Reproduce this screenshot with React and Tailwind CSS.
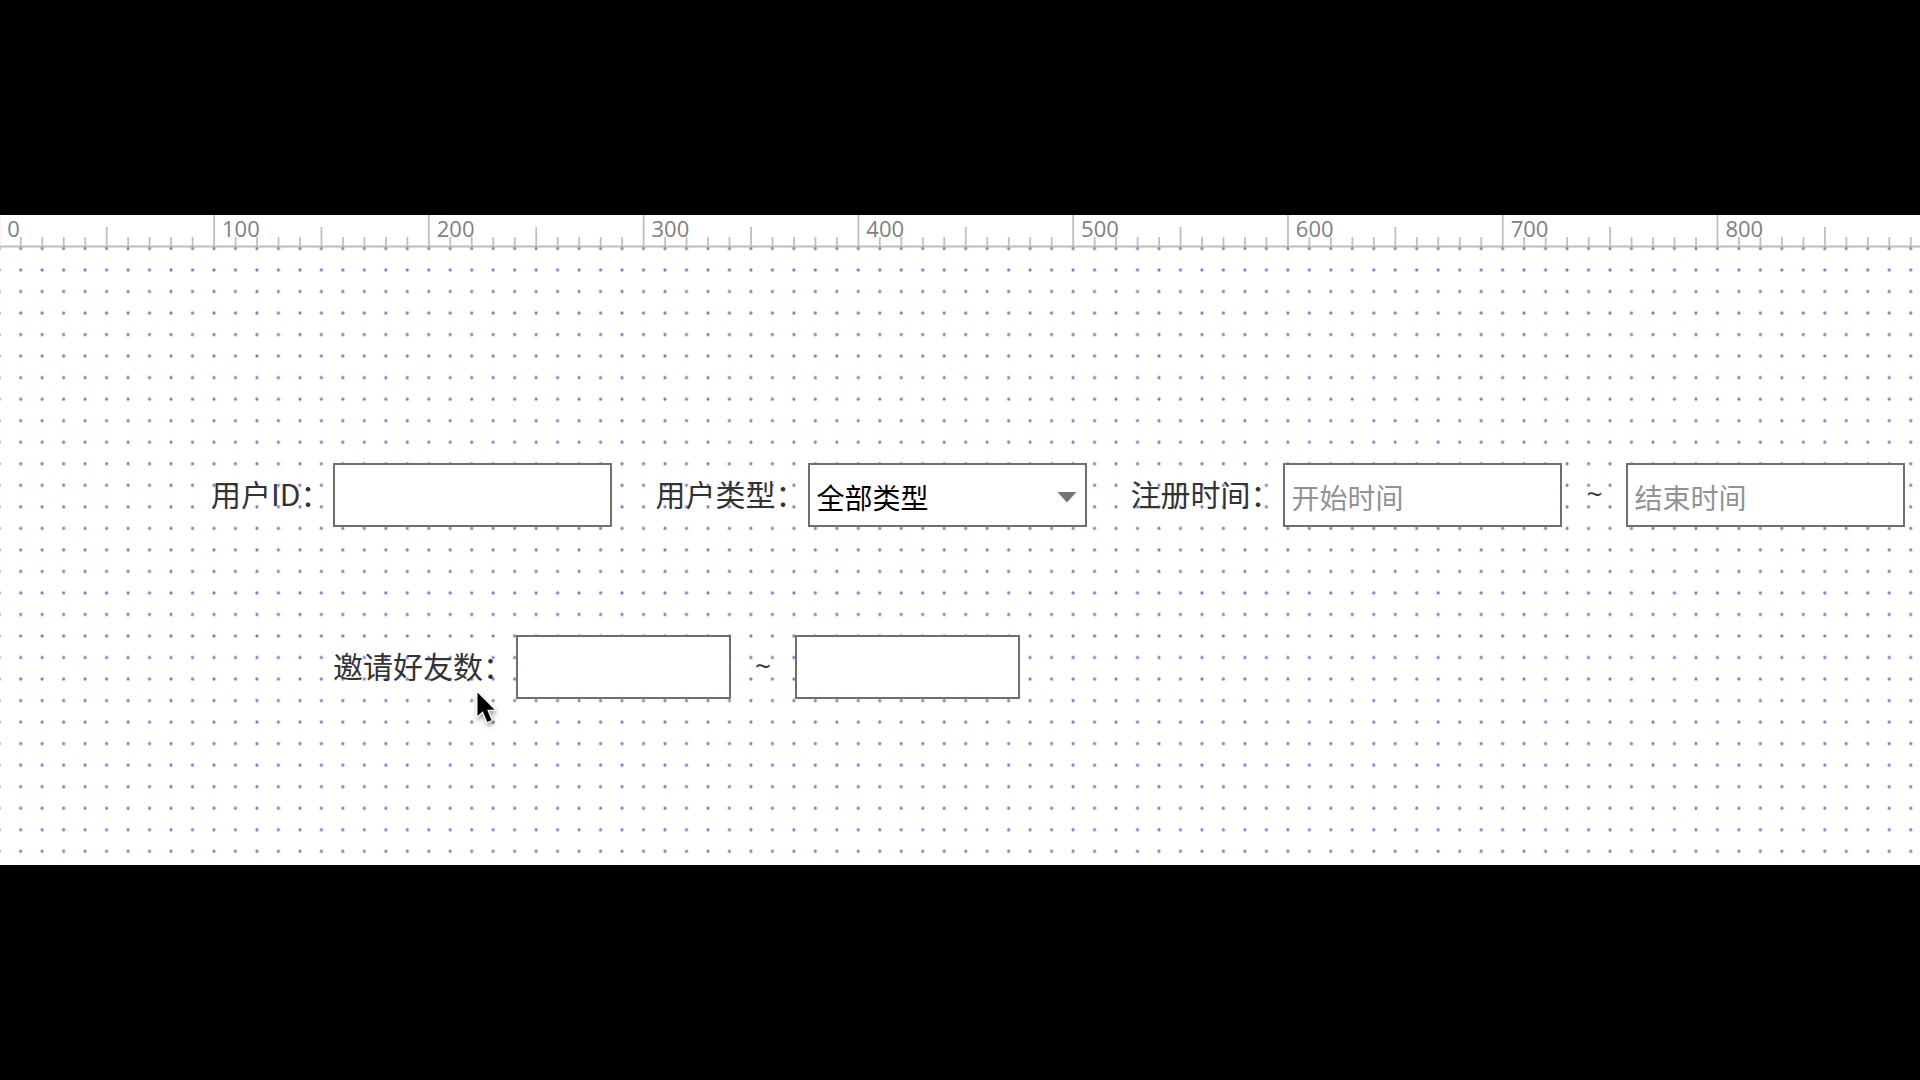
import React from "react";

const FONT = "font-['Noto_Sans_CJK_SC',sans-serif]";

// Distance on screen between neighbouring grid dots (10 canvas units).
const STEP_X = 1911.5 / 89;
const STEP_Y = 581.3 / 27;
const ORIGIN_X = -0.8;
const MAJORS = Array.from({ length: 9 }, (_, i) => i);
const TICKS = Array.from({ length: 90 }, (_, i) => i);

function Ruler() {
  return (
    <svg className="block h-8 w-full shrink-0 overflow-visible" aria-label="Ruler">
      {TICKS.map((i) => {
        const top = i % 10 === 0 ? 0 : i % 5 === 0 ? 12 : 22;
        return (
          <rect
            key={i}
            x={ORIGIN_X + i * STEP_X - 0.8}
            y={top}
            width="1.8"
            height={31 - top}
            fill="#bfbfbf"
          />
        );
      })}
      <rect x="0" y="30.5" width="100%" height="2" fill="#bdbdbd" />
      {MAJORS.map((n) => (
        <text
          key={n}
          x={ORIGIN_X + n * 10 * STEP_X + 8}
          y="22"
          fill="#808080"
          className="font-['Open_Sans',sans-serif] text-[22px]"
        >
          {n * 100}
        </text>
      ))}
    </svg>
  );
}

function DotGrid() {
  return (
    <svg className="pointer-events-none absolute inset-0 h-full w-full" aria-hidden="true">
      <defs>
        <pattern
          id="dots"
          x={ORIGIN_X - STEP_X / 2}
          y={55 - STEP_Y * 1.5}
          width={STEP_X}
          height={STEP_Y}
          patternUnits="userSpaceOnUse"
        >
          <circle cx={STEP_X / 2} cy={STEP_Y / 2} r="1.6" fill="#8078d2" />
        </pattern>
      </defs>
      <rect x="0" y="32" width="100%" height="100%" fill="url(#dots)" />
    </svg>
  );
}

function Label({ htmlFor, children }) {
  return (
    <label htmlFor={htmlFor} className="shrink-0 whitespace-nowrap pr-[3px] pb-1 text-[30px] leading-[44px] text-[#333333]">
      {children}
    </label>
  );
}

function Box({ id, width, ...rest }) {
  return (
    <input
      id={id}
      type="text"
      className={`${width} h-16 shrink-0 rounded-none border-2 border-[#6f6f6f] bg-white px-1.5 pt-1 text-[28px] text-black outline-none placeholder:text-[#929292] placeholder:opacity-100`}
      {...rest}
    />
  );
}

function Tilde() {
  return (
    <span className="w-16 shrink-0 pb-1 text-center font-['Open_Sans',sans-serif] text-[28px] leading-[44px] font-medium text-[#333333]">
      ~
    </span>
  );
}

export default function App() {
  return (
    <main className={`${FONT} flex min-h-screen flex-col justify-center overflow-hidden bg-black`} lang="zh-CN">
      <section className="relative bg-white pb-[166px]">
        <Ruler />
        <DotGrid />
        <form className="relative flex flex-col gap-[108px] pt-[216px]">
          <div className="flex items-center gap-[43px] pl-[211px]">
            <div className="flex shrink-0 items-center">
              <Label htmlFor="user-id">用户ID：</Label>
              <Box id="user-id" width="w-[279px]" />
            </div>
            <div className="flex shrink-0 items-center">
              <Label htmlFor="user-type">用户类型：</Label>
              <div className="relative w-[279px]">
                <select
                  id="user-type"
                  className="block h-16 w-full appearance-none rounded-none border-2 border-[#6f6f6f] bg-white px-1.5 pt-1 text-[28px] text-black outline-none"
                >
                  <option>全部类型</option>
                </select>
                <svg
                  className="pointer-events-none absolute top-[29px] right-[10px] h-[11px] w-5"
                  viewBox="0 0 20 11"
                  aria-hidden="true"
                >
                  <path d="M0.5 0H19.5L10 10.5Z" fill="#757575" />
                </svg>
              </div>
            </div>
            <div className="flex shrink-0 items-center">
              <Label htmlFor="start-time">注册时间：</Label>
              <Box id="start-time" width="w-[279px]" placeholder="开始时间" />
              <Tilde />
              <Box id="end-time" width="w-[279px]" placeholder="结束时间" aria-label="结束时间" />
            </div>
          </div>
          <div className="flex items-center pl-[333px]">
            <Label htmlFor="friends-min">邀请好友数：</Label>
            <Box id="friends-min" width="w-[215px]" />
            <Tilde />
            <Box id="friends-max" width="w-[225px]" aria-label="邀请好友数上限" />
          </div>
        </form>
        <svg
          className="pointer-events-none absolute top-[472px] left-[472px] h-10 w-7 drop-shadow-[1px_3px_2px_rgba(0,0,0,0.35)]"
          viewBox="0 0 28 40"
          aria-hidden="true"
        >
          <path
            d="M5.5 5.5V29L10.8 24.2L15.2 35L19.6 33.2L15.2 22.8H22.6Z"
            fill="#000"
            stroke="#fff"
            strokeWidth="2.4"
            strokeLinejoin="round"
            paintOrder="stroke"
          />
        </svg>
      </section>
    </main>
  );
}
